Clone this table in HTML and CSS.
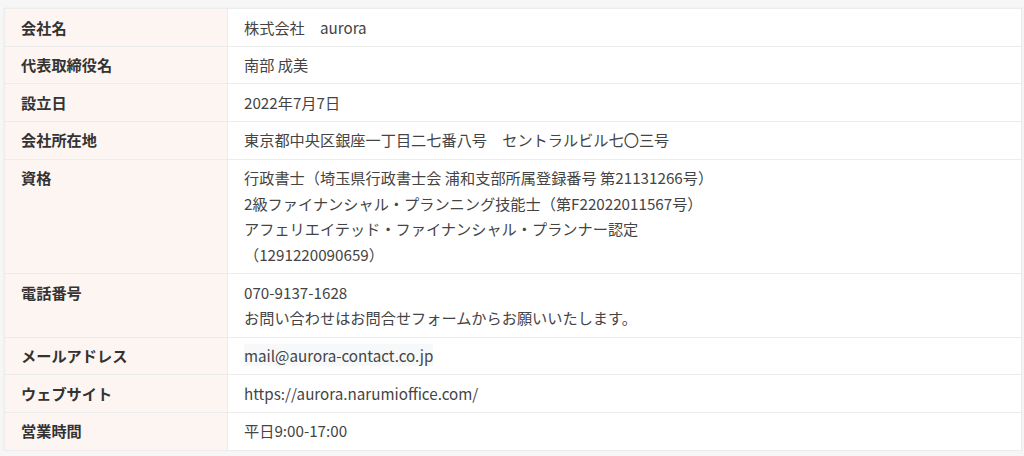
FILE: index.html
```html
<!DOCTYPE html>
<html lang="ja">
<head>
<meta charset="utf-8">
<title>会社概要</title>
<link rel="stylesheet" href="styles.css">
</head>
<body>
<div class="page">
<table class="info">
<tbody>
<tr><th>会社名</th><td>株式会社　aurora</td></tr>
<tr><th>代表取締役名</th><td>南部 成美</td></tr>
<tr><th>設立日</th><td>2022年7月7日</td></tr>
<tr><th>会社所在地</th><td>東京都中央区銀座一丁目二七番八号　セントラルビル七〇三号</td></tr>
<tr><th>資格</th><td>行政書士（埼玉県行政書士会 浦和支部所属登録番号 第21131266号）<br>2級ファイナンシャル・プランニング技能士（第F22022011567号）<br>アフェリエイテッド・ファイナンシャル・プランナー認定<br>（1291220090659）</td></tr>
<tr><th>電話番号</th><td>070-9137-1628<br>お問い合わせはお問合せフォームからお願いいたします。</td></tr>
<tr><th>メールアドレス</th><td><span class="mail">mail@aurora-contact.co.jp</span></td></tr>
<tr><th>ウェブサイト</th><td>https://aurora.narumioffice.com/</td></tr>
<tr><th>営業時間</th><td>平日9:00-17:00</td></tr>
</tbody>
</table>
</div>
</body>
</html>
```

FILE: styles.css
```css
html, body {
  margin: 0;
  padding: 0;
  background: #f6f6f6;
}
.page {
  padding: 8px 2px 0 4px;
}
.info {
  width: 100%;
  border-collapse: collapse;
  background: #fff;
  font-family: "Noto Sans CJK JP", "Noto Sans", sans-serif;
  font-size: 15.2px;
  line-height: 25.65px;
  box-shadow: 0 0 2px rgba(0,0,0,0.06);
}
.info th, .info td {
  border: 1.5px solid #ececec;
  padding: 5.5px 16px;
  text-align: left;
  vertical-align: top;
}
.info th {
  width: 190px;
  background: #fdf5f2;
  color: #333;
  font-weight: bold;
}
.info td {
  color: #444;
  font-weight: normal;
}
.mail {
  background: #f7f8fa;
}
```
